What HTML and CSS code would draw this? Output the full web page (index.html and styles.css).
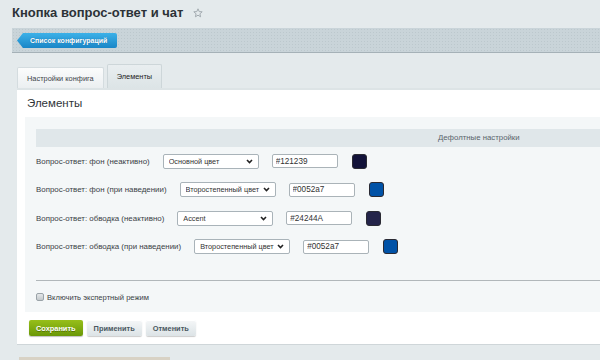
FILE: index.html
```
<!DOCTYPE html>
<html>
<head>
    <title>Кнопка вопрос-ответ и чат</title>
    <link rel="stylesheet" href="styles.css">
</head>
<body>
    <h1 class="page-title">Кнопка вопрос-ответ и чат
        <svg class="star" width="10" height="10" viewBox="0 0 10 10"><polygon points="5,0.8 6.2,3.6 9.2,3.8 6.9,5.8 7.6,8.8 5,7.2 2.4,8.8 3.1,5.8 0.8,3.8 3.8,3.6" fill="none" stroke="#a3abb0" stroke-width="1"/></svg>
    </h1>

    <div class="toolbar">
        <a class="back-button" href="#">Список конфигураций</a>
    </div>

    <div class="tabs">
        <div class="tab">Настройки конфига</div>
        <div class="tab active">Элементы</div>
    </div>

    <div class="panel">
        <div class="panel-title">Элементы</div>
        <div class="content">
            <div class="table-head"><span>Дефолтные настройки</span></div>

            <div class="row">
                <span class="row-label">Вопрос-ответ: фон (неактивно)</span>
                <span class="select"><select><option>Основной цвет</option></select><svg class="chevron" width="7" height="5" viewBox="0 0 7 5"><path d="M1 1 L3.5 3.5 L6 1" fill="none" stroke="#222" stroke-width="1.6"/></svg></span>
                <input class="hex" type="text" value="#121239">
                <span class="swatch" style="background: #121239;"></span>
            </div>
            <div class="row">
                <span class="row-label">Вопрос-ответ: фон (при наведении)</span>
                <span class="select"><select><option>Второстепенный цвет</option></select><svg class="chevron" width="7" height="5" viewBox="0 0 7 5"><path d="M1 1 L3.5 3.5 L6 1" fill="none" stroke="#222" stroke-width="1.6"/></svg></span>
                <input class="hex" type="text" value="#0052a7">
                <span class="swatch" style="background: #0052a7;"></span>
            </div>
            <div class="row">
                <span class="row-label">Вопрос-ответ: обводка (неактивно)</span>
                <span class="select"><select><option>Accent</option></select><svg class="chevron" width="7" height="5" viewBox="0 0 7 5"><path d="M1 1 L3.5 3.5 L6 1" fill="none" stroke="#222" stroke-width="1.6"/></svg></span>
                <input class="hex" type="text" value="#24244A">
                <span class="swatch" style="background: #24244a;"></span>
            </div>
            <div class="row">
                <span class="row-label">Вопрос-ответ: обводка (при наведении)</span>
                <span class="select"><select><option>Второстепенный цвет</option></select><svg class="chevron" width="7" height="5" viewBox="0 0 7 5"><path d="M1 1 L3.5 3.5 L6 1" fill="none" stroke="#222" stroke-width="1.6"/></svg></span>
                <input class="hex" type="text" value="#0052a7">
                <span class="swatch" style="background: #0052a7;"></span>
            </div>

            <div class="separator"></div>
            <label class="expert"><span class="checkbox"></span>Включить экспертный режим</label>
        </div>

        <div class="buttons">
            <button class="btn btn-save">Сохранить</button>
            <button class="btn">Применить</button>
            <button class="btn">Отменить</button>
        </div>
    </div>

    <div class="footer-strip"></div>
</body>
</html>
```

FILE: styles.css
```
body {
    margin: 0;
    background-color: #e4eaec;
    font-family: "Liberation Sans", Arial, sans-serif;
    color: #333333;
    height: 360px;
    overflow: hidden;
}

.page-title {
    margin: 0;
    height: 28px;
    padding: 4px 0 0 12px;
    box-sizing: border-box;
    font-size: 13px;
    line-height: 18px;
    font-weight: bold;
    color: #2c3237;
}

.star {
    margin-left: 6px;
    vertical-align: -1px;
}

/* toolbar with back button */
.toolbar {
    margin-left: 12px;
    height: 19px;
    padding: 5px 0 0 5px;
    background-color: #c9d4d9;
    background-image: radial-gradient(#bcc8cd 0.6px, transparent 0.8px);
    background-size: 3px 3px;
    border-bottom: 1px solid #a5b1b7;
}

.back-button {
    display: block;
    width: max-content;
    height: 15px;
    line-height: 15px;
    padding: 0 10px 0 13px;
    font-size: 7px;
    font-weight: bold;
    color: #ffffff;
    text-decoration: none;
    background: linear-gradient(#3cb1e8, #1a86c7);
    border-radius: 0 2px 2px 0;
    clip-path: polygon(6px 0, 100% 0, 100% 100%, 6px 100%, 0 50%);
    text-shadow: 0 0 1px rgba(0, 60, 110, 0.6);
}

/* tabs */
.tabs {
    display: flex;
    align-items: flex-end;
    gap: 3px;
    margin: 11px 0 0 17px;
    height: 24px;
}

.tab {
    height: 21px;
    line-height: 21px;
    padding: 0 9px;
    box-sizing: border-box;
    font-size: 7.4px;
    color: #3d4449;
    background: linear-gradient(#fbfcfc, #ebeff1);
    border: 1px solid #d4dcdf;
    border-bottom: none;
    border-radius: 2px 2px 0 0;
}

.tab.active {
    height: 24px;
    line-height: 24px;
    color: #222222;
    background: linear-gradient(#e9eef0, #dce4e6);
    border-color: #cdd6d9;
}

/* main panel */
.panel {
    margin-left: 17px;
    background-color: #ffffff;
    border-top: 2px solid #dde4e6;
    border-bottom: 1px solid #cfd6d9;
    padding: 0 0 8px 8px;
}

.panel-title {
    height: 27px;
    line-height: 27px;
    padding-left: 2px;
    font-size: 11.5px;
    color: #2f3438;
}

.content {
    background-color: #f4f7f8;
    padding: 12px 0 11px 11px;
}

.table-head {
    height: 18px;
    line-height: 18px;
    padding-left: 402px;
    background-color: #e0e7ea;
    font-size: 7.8px;
    color: #5a646a;
}

.row {
    display: flex;
    align-items: center;
    height: 28.5px;
}

.row-label {
    font-size: 7.9px;
    color: #3a4146;
    margin-right: 13px;
}

.select {
    position: relative;
    display: flex;
    width: 96px;
    height: 15px;
}

.select select {
    display: block;
    appearance: none;
    width: 100%;
    height: 100%;
    margin: 0;
    padding: 0 14px 0 5px;
    border: 1px solid #a9b3b9;
    border-radius: 2px;
    background-color: #ffffff;
    font-family: "Liberation Sans", Arial, sans-serif;
    font-size: 7.3px;
    line-height: 13px;
    color: #333333;
}

.chevron {
    position: absolute;
    right: 6px;
    top: 5px;
}

.hex {
    width: 66px;
    height: 14px;
    box-sizing: border-box;
    margin: 0 0 0 13px;
    padding: 0 0 0 3px;
    border: 1px solid #aab3b8;
    border-radius: 2px;
    font-family: "Liberation Sans", Arial, sans-serif;
    font-size: 8.2px;
    color: #333333;
}

.swatch {
    width: 15px;
    height: 15px;
    box-sizing: border-box;
    margin-left: 14px;
    border: 1px solid #2a2a33;
    border-radius: 3px;
}

.separator {
    margin-top: 19px;
    border-top: 1px solid #b1b7ba;
}

.expert {
    display: flex;
    align-items: center;
    gap: 3px;
    margin-top: 12px;
    height: 8px;
    font-size: 7.6px;
    color: #3a4146;
}

.checkbox {
    width: 8px;
    height: 8px;
    box-sizing: border-box;
    border: 1px solid #9aa3a8;
    border-radius: 2px;
    background: linear-gradient(#e4e7e9, #c3c9cc);
}

/* bottom buttons */
.buttons {
    display: flex;
    gap: 4px;
    padding: 8px 0 0 4px;
}

.btn {
    height: 16px;
    padding: 0 7px;
    border: none;
    border-radius: 2px;
    font-family: "Liberation Sans", Arial, sans-serif;
    font-size: 7.4px;
    font-weight: bold;
    color: #4a5861;
    background: linear-gradient(#f5f7f8, #dce3e6);
    box-shadow: 0 1px 1px rgba(0, 0, 0, 0.2), inset 0 1px 0 #ffffff;
}

.btn-save {
    color: #ffffff;
    background: linear-gradient(#97bf1a, #6a9807);
    text-shadow: 0 1px 0 rgba(60, 80, 0, 0.6);
    box-shadow: 0 1px 1px rgba(0, 0, 0, 0.25);
}

.footer-strip {
    margin: 12px 0 0 19px;
    width: 151px;
    height: 3px;
    background-color: #d8d2c5;
}
```
